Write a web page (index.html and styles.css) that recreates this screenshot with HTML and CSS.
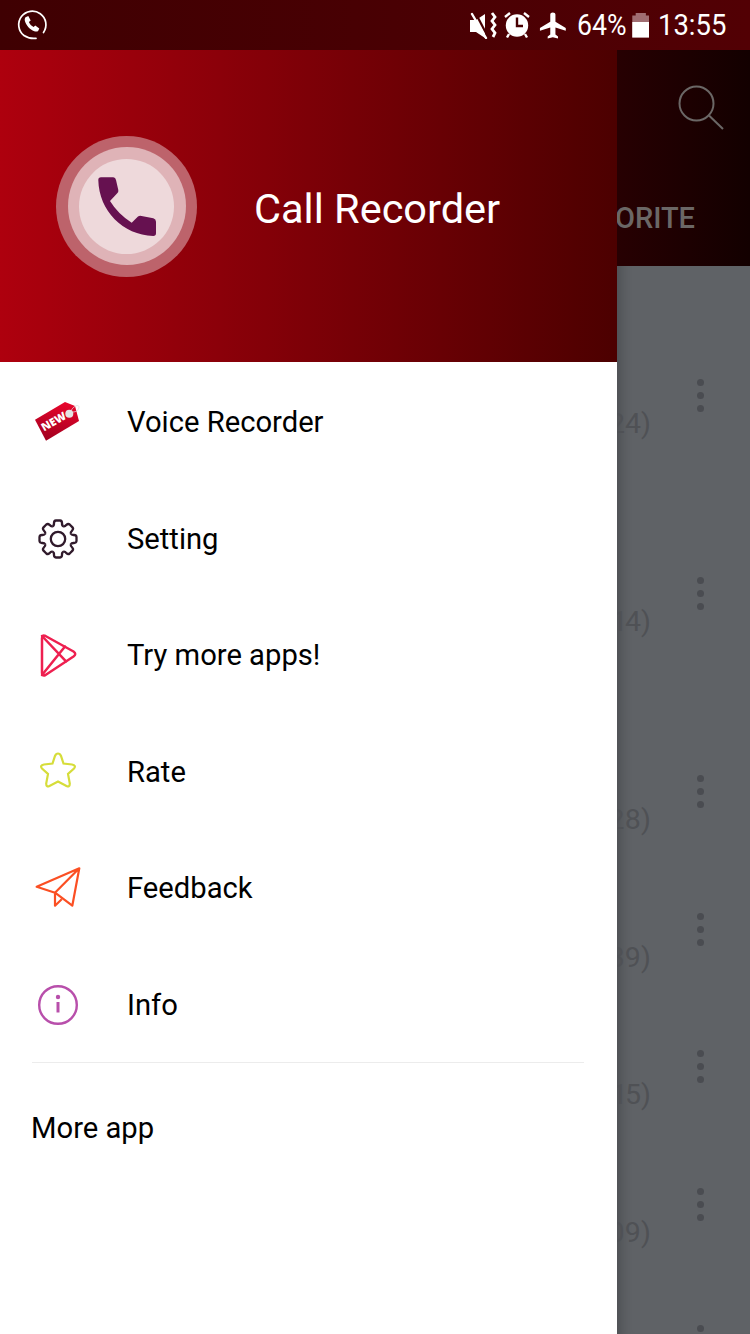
FILE: index.html
```html
<!DOCTYPE html>
<html lang="en">
<head>
    <meta charset="UTF-8">
    <meta name="viewport" content="width=device-width, initial-scale=1.0">
    <title>Call Recorder</title>
    <link rel="stylesheet" href="styles.css">
</head>
<body>
    <div class="status-bar">
        <svg class="status-call" width="32" height="32" viewBox="0 0 32 32">
            <path d="M8 26.500A13.600 13.600 0 1 1 27.500 23.500M8 26.500Q13 30 20 29.300" fill="none" stroke="#fff" stroke-width="1.700" stroke-linecap="round"/>
            <path d="M9.500 8.200l2.800-1.200 2.400 4.400-1.800 1.600c.8 2 2.600 4 4.700 5l1.700-1.500 4 3-1.200 2.400c-.8.9-2.400.9-3.800.3-4.500-1.800-8-5.600-9.400-10.200-.3-1.400-.2-3 .6-3.800z" fill="#fff"/>
        </svg>
        <div class="status-right">
            <svg width="30" height="28" viewBox="0 0 30 28">
                <path d="M1 9h6l9-6v24l-9-6H1z" fill="#fff"/>
                <path d="M6 1L19 26" stroke="#470002" stroke-width="2.200"/>
                <path d="M3 3L17 27" stroke="#fff" stroke-width="2.400" stroke-linecap="round"/>
                <path d="M23 2l3 4-3 4 3 4-3 4 3 4-2 4" fill="none" stroke="#fff" stroke-width="2.800"/>
            </svg>
            <svg class="status-alarm" width="28" height="28" viewBox="0 0 28 28">
                <circle cx="14" cy="14.500" r="11.200" fill="#fff"/>
                <path d="M14 6.500v8.500h6" fill="none" stroke="#470002" stroke-width="2.400"/>
                <path d="M2 6l5-4M26 6l-5-4M6 23l-2 3.500M22 23l2 3.500" stroke="#fff" stroke-width="2.400"/>
            </svg>
            <svg class="status-plane" width="31" height="31" viewBox="0 0 24 24">
                <path d="M21.500 16v-2l-8-5V3.500c0-.83-.8-1.500-2-1.500s-2 .67-2 1.500V9l-8 5v2l8-2.500V19l-2 1.500V22l4-1 4 1v-1.500l-2-1.500v-5.500z" fill="#fff"/>
            </svg>
            <span class="status-text status-battery-text">64%</span>
            <div class="battery"><div class="battery-fill"></div></div>
            <span class="status-text status-clock">13:55</span>
        </div>
    </div>

    <div class="screen">
        <div class="drawer">
            <div class="drawer-header">
                <div class="logo-outer">
                    <div class="logo-mid">
                        <div class="logo-inner">
                            <svg width="78" height="78" viewBox="0 0 78 78">
                                <path d="M10.300 13Q10.300 10.300 13 10.300H25.300Q27.500 10.300 28 13L30.300 23Q30.800 25 29 26.500L22 34Q30 47 43.700 55.700L50 49.500Q51.500 48.500 53.500 49L65.300 51.300Q68 52 68 54.700V66.300Q68 69 65.300 69C35 68 11 44 10.300 13z" fill="#661150"/>
                            </svg>
                        </div>
                    </div>
                </div>
                <div class="app-name">Call Recorder</div>
            </div>

            <div class="menu">
                <div class="menu-item">
                    <svg class="menu-icon" width="50" height="44" viewBox="0 0 50 44">
                        <defs>
                            <linearGradient id="tagFill" x1="0.600" y1="0" x2="0.400" y2="1">
                                <stop offset="0" stop-color="#e8062c"/>
                                <stop offset="1" stop-color="#a2001f"/>
                            </linearGradient>
                        </defs>
                        <path d="M2 19.700L32 2 42 6 46 21 13 40.700z" fill="url(#tagFill)"/>
                        <circle cx="36.300" cy="13.700" r="4" fill="#e4e4e4"/>
                        <path d="M38 11c2-5 8-7 8-4s-3 5-6 5" fill="none" stroke="#ddd" stroke-width=".8"/>
                        <text class="tag-text" transform="translate(11 31.500) rotate(-30)">NEW</text>
                    </svg>
                    <span class="menu-label">Voice Recorder</span>
                </div>
                <div class="menu-item">
                    <svg class="menu-icon" width="50" height="44" viewBox="-25 -22 50 44">
                        <g fill="none" stroke="#301a2b" stroke-width="2.300" stroke-linejoin="round">
                            <circle r="7.200"/>
                            <path id="gearTooth" d="M-5.400-12.800Q-3.800-13.500-4-16-4-18.300-2-18.500H2Q4-18.300 4-16 3.800-13.500 5.400-12.800"/>
                            <use href="#gearTooth" transform="rotate(45)"/>
                            <use href="#gearTooth" transform="rotate(90)"/>
                            <use href="#gearTooth" transform="rotate(135)"/>
                            <use href="#gearTooth" transform="rotate(180)"/>
                            <use href="#gearTooth" transform="rotate(225)"/>
                            <use href="#gearTooth" transform="rotate(270)"/>
                            <use href="#gearTooth" transform="rotate(315)"/>
                        </g>
                    </svg>
                    <span class="menu-label">Setting</span>
                </div>
                <div class="menu-item">
                    <svg class="menu-icon" width="50" height="44" viewBox="0 0 50 44">
                        <g fill="none" stroke="#ee2050" stroke-width="2.500" stroke-linejoin="round" stroke-linecap="round">
                            <path d="M9 5.500Q9 1.500 12.500 3L40.500 18.500Q44 21 40.500 23.500L12.500 42Q9 43.500 9 40z"/>
                            <path d="M9 3L33 28.400M9 42L32 13.500"/>
                        </g>
                    </svg>
                    <span class="menu-label">Try more apps!</span>
                </div>
                <div class="menu-item">
                    <svg class="menu-icon" width="50" height="44" viewBox="0 0 50 44">
                        <path d="M25 3.500Q27 3.500 28 6L30.500 13.500 39 14.500Q43.500 15.500 41 18.500L35 24 36.800 33.500Q36.800 37.500 33.500 36L25 31.500 16.500 36Q13.200 37.500 13.200 33.500L15 24 9 18.500Q6.500 15.500 11 14.500L19.500 13.500 22 6Q23 3.500 25 3.500z" fill="none" stroke="#d6dd3a" stroke-width="2.200"/>
                    </svg>
                    <span class="menu-label">Rate</span>
                </div>
                <div class="menu-item">
                    <svg class="menu-icon" width="50" height="44" viewBox="0 0 50 44">
                        <g fill="none" stroke="#fb4f23" stroke-width="2.200" stroke-linejoin="round">
                            <path d="M46.300 2.300L3.700 20.700 22 26.700zM22 26.700L39.300 39.700 46.300 2.300M22 26.700V39.700L28.700 33.300"/>
                        </g>
                    </svg>
                    <span class="menu-label">Feedback</span>
                </div>
                <div class="menu-item">
                    <svg class="menu-icon" width="50" height="44" viewBox="0 0 50 44">
                        <circle cx="25" cy="22" r="18.800" fill="none" stroke="#b84fab" stroke-width="2.400"/>
                        <circle cx="25" cy="14" r="2.200" fill="#b84fab"/>
                        <path d="M25 19v10.500" stroke="#b84fab" stroke-width="3"/>
                    </svg>
                    <span class="menu-label">Info</span>
                </div>
            </div>

            <div class="drawer-footer">More app</div>
        </div>

        <div class="behind">
            <div class="behind-toolbar">
                <svg class="search-icon" width="50" height="50" viewBox="0 0 50 50">
                    <circle cx="20.500" cy="19.500" r="17" fill="none" stroke="#6b6766" stroke-width="2"/>
                    <path d="M33 31.500L47 45" stroke="#6b6766" stroke-width="2"/>
                </svg>
                <div class="tab-label">ORITE</div>
            </div>
            <div class="behind-list">
                <div class="row row-tall"><span class="row-text">24)</span><div class="row-dots"><i></i><i></i><i></i></div></div>
                <div class="row row-tall"><span class="row-text">14)</span><div class="row-dots"><i></i><i></i><i></i></div></div>
                <div class="row"><span class="row-text">28)</span><div class="row-dots"><i></i><i></i><i></i></div></div>
                <div class="row"><span class="row-text">39)</span><div class="row-dots"><i></i><i></i><i></i></div></div>
                <div class="row"><span class="row-text">15)</span><div class="row-dots"><i></i><i></i><i></i></div></div>
                <div class="row"><span class="row-text">09)</span><div class="row-dots"><i></i><i></i><i></i></div></div>
                <div class="row"><span class="row-text"></span><div class="row-dots"><i></i><i></i><i></i></div></div>
            </div>
        </div>
    </div>
</body>
</html>
```

FILE: styles.css
```css
* { margin: 0; padding: 0; box-sizing: border-box; }

body {
    font-family: Roboto, sans-serif;
    width: 750px;
    height: 1334px;
    overflow: hidden;
    background: #5f6266;
}

.status-bar {
    height: 50px;
    display: flex;
    align-items: center;
    justify-content: space-between;
    padding: 0 23px 0 16px;
    background: linear-gradient(90deg, #3f0002 0%, #520004 100%);
    color: white;
}

.status-right {
    display: flex;
    align-items: center;
}

/* the phone's status font is narrower than Roboto */
.status-text {
    display: inline-block;
    font-size: 30px;
    line-height: 50px;
    transform-origin: left center;
    white-space: nowrap;
}

.status-alarm { margin-left: 4px; }
.status-plane { margin-left: 7px; }

.status-battery-text {
    margin-left: 8px;
    margin-right: -6px;
    transform: scaleX(0.89);
}

.battery {
    width: 17px;
    height: 25px;
    margin-left: 6px;
    background: #a06d72;
    clip-path: polygon(20% 0, 80% 0, 80% 12%, 100% 12%, 100% 100%, 0 100%, 0 12%, 20% 12%);
    display: flex;
    align-items: flex-end;
}

.battery-fill {
    width: 100%;
    height: 64%;
    background: white;
}

.status-clock {
    margin-left: 9px;
    margin-right: -6px;
    transform: scaleX(0.915);
}

.screen {
    display: flex;
    height: 1284px;
}

.drawer {
    width: 617px;
    flex-shrink: 0;
    background: white;
}

.drawer-header {
    height: 312px;
    display: flex;
    align-items: center;
    padding-left: 56px;
    background: linear-gradient(90deg, #ae000e 0%, #4c0000 100%);
}

.logo-outer, .logo-mid, .logo-inner {
    border-radius: 50%;
    display: flex;
    align-items: center;
    justify-content: center;
    flex-shrink: 0;
}

.logo-outer { width: 141px; height: 141px; background: #bd636b; }
.logo-mid { width: 118px; height: 118px; background: #dfb3b7; }
.logo-inner { width: 95px; height: 95px; background: #eed9db; }

.app-name {
    margin-left: 57px;
    padding-top: 4px;
    color: white;
    font-size: 41.5px;
}

.menu {
    height: 701px;
    padding-top: 2px;
    margin: 0 33px 0 32px;
    border-bottom: 1px solid #ececec;
}

.menu-item {
    height: 116.5px;
    display: flex;
    align-items: center;
    color: black;
}

.menu-icon {
    flex-shrink: 0;
    width: 50px;
    margin-left: 1px;
}

.menu-label {
    margin-left: 44px;
    font-size: 29.2px;
}

.tag-text {
    font-family: "Open Sans", sans-serif;
    font-weight: 800;
    font-size: 11px;
    fill: white;
}

.drawer-footer {
    padding: 46px 31px 0;
    font-size: 29.2px;
    line-height: 38px;
    color: black;
}

.behind {
    flex: 1;
    min-width: 0;
    overflow: hidden;
    box-shadow: inset 14px 0 12px -10px rgba(0,0,0,0.2);
}

.behind-toolbar {
    height: 216px;
    position: relative;
    background: linear-gradient(90deg, #270002 0%, #130000 100%);
}

.search-icon {
    position: absolute;
    left: 59px;
    top: 34px;
}

.tab-label {
    padding-top: 150px;
    color: #6b6766;
    font-size: 29px;
    font-weight: 500;
    line-height: 36px;
    width: 78px;
    overflow: hidden;
    display: flex;
    justify-content: flex-end;
}

.behind-list {
    padding-top: 113px;
}

.row {
    display: flex;
    align-items: flex-start;
    height: 137.5px;
}

.row-tall { height: 198px; }

.row-text {
    width: 34px;
    margin-top: 29px;
    display: flex;
    justify-content: flex-end;
    flex-shrink: 0;
    font-size: 28.5px;
    font-variant-numeric: proportional-nums;
    line-height: 32px;
    color: #4f5155;
    white-space: nowrap;
}

.row-dots {
    margin-left: 46px;
    display: flex;
    flex-direction: column;
    gap: 6px;
}

.row-dots i {
    display: block;
    width: 7px;
    height: 7px;
    border-radius: 50%;
    background: #4a4c51;
}
```
